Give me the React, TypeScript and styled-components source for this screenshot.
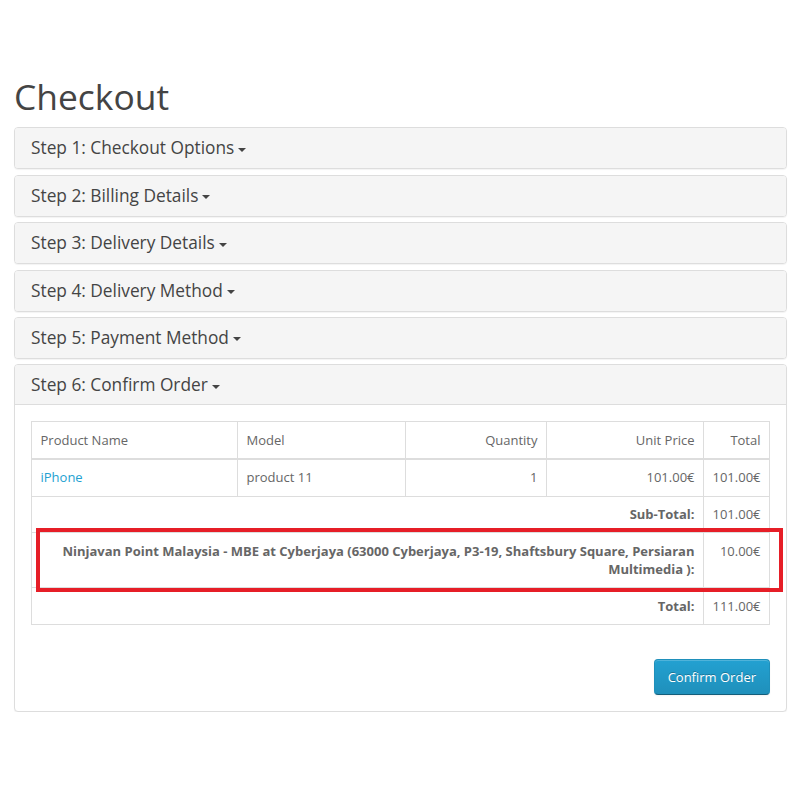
import React from 'react'
import styled, { createGlobalStyle } from 'styled-components'

const GlobalStyle = createGlobalStyle`
  html, body {
    margin: 0;
    padding: 0;
    background: #fff;
  }
  body {
    font-family: 'Open Sans', 'Liberation Sans', sans-serif;
    font-size: 13px;
    line-height: 1.42857;
    color: #666;
  }
`

const Page = styled.div`
  width: 773px;
  margin-left: 14px;
  padding-top: 77px;
`

const Title = styled.h1`
  margin: 0 0 11.5px;
  font-size: 35.4px;
  font-weight: 400;
  line-height: 1.1;
  color: #444;
`

const PanelGroup = styled.div`
  display: flex;
  flex-direction: column;
  gap: 5.4px;
`

const Panel = styled.div`
  border: 1px solid #ddd;
  border-radius: 4px;
  background: #fff;
  box-shadow: 0 1px 1px rgba(0, 0, 0, 0.05);
`

const PanelHeading = styled.div<{ $open?: boolean }>`
  padding: 11px 16px 10px;
  background: #f5f5f5;
  border-bottom: 1px solid ${(p) => (p.$open ? '#ddd' : 'transparent')};
  border-radius: ${(p) => (p.$open ? '3px 3px 0 0' : '3px')};
`

const PanelTitle = styled.h4`
  margin: 0;
  font-size: 17.3px;
  font-weight: 400;
  line-height: 18px;
  color: #444;
`

const Caret = styled.span`
  display: inline-block;
  width: 0;
  height: 0;
  margin-left: 4px;
  vertical-align: middle;
  border-top: 4.5px solid #444;
  border-left: 4.5px solid transparent;
  border-right: 4.5px solid transparent;
`

const PanelBody = styled.div`
  padding: 16px;
`

const TableWrap = styled.div`
  position: relative;
`

const Table = styled.table`
  width: 100%;
  border-collapse: collapse;
  table-layout: fixed;
  border: 1px solid #ddd;
`

const Cell = styled.td<{ $right?: boolean; $head?: boolean }>`
  padding: 8.5px;
  border: 1px solid #ddd;
  border-bottom-width: ${(p) => (p.$head ? '2px' : '1px')};
  text-align: ${(p) => (p.$right ? 'right' : 'left')};
  vertical-align: top;
  color: #666;
`

const Link = styled.a`
  color: #23a1d1;
  text-decoration: none;
`

const Strong = styled.strong`
  font-weight: 700;
  color: #666;
`

const Highlight = styled.div`
  position: absolute;
  top: 107px;
  left: 4.5px;
  right: -12.5px;
  height: 64px;
  box-sizing: border-box;
  border: 4.5px solid #e61e27;
  pointer-events: none;
`

const Buttons = styled.div`
  display: flex;
  justify-content: flex-end;
  margin-top: 34px;
`

const PrimaryButton = styled.button`
  height: 36px;
  padding: 0 13px;
  font-family: inherit;
  font-size: 13px;
  color: #fff;
  text-shadow: 0 -1px 0 rgba(0, 0, 0, 0.25);
  background-image: linear-gradient(to bottom, #23a1d1, #1f90bb);
  border: 1px solid;
  border-color: #1f90bb #1f90bb #145e7a;
  border-radius: 4px;
  box-shadow: inset 0 1px 0 rgba(255, 255, 255, 0.2), 0 1px 2px rgba(0, 0, 0, 0.05);
  cursor: pointer;
`

const steps = [
  'Step 1: Checkout Options',
  'Step 2: Billing Details',
  'Step 3: Delivery Details',
  'Step 4: Delivery Method',
  'Step 5: Payment Method',
]

const totals = [
  { label: 'Sub-Total:', value: '101.00€' },
  {
    label:
      'Ninjavan Point Malaysia - MBE at Cyberjaya (63000 Cyberjaya, P3-19, Shaftsbury Square, Persiaran Multimedia ):',
    value: '10.00€',
  },
  { label: 'Total:', value: '111.00€' },
]

export default function App() {
  return (
    <Page>
      <GlobalStyle />
      <Title>Checkout</Title>
      <PanelGroup>
        {steps.map((s) => (
          <Panel key={s}>
            <PanelHeading>
              <PanelTitle>
                {s}
                <Caret />
              </PanelTitle>
            </PanelHeading>
          </Panel>
        ))}
        <Panel>
          <PanelHeading $open>
            <PanelTitle>
              Step 6: Confirm Order
              <Caret />
            </PanelTitle>
          </PanelHeading>
          <PanelBody>
            <TableWrap>
              <Table>
                <colgroup>
                  <col style={{ width: 206 }} />
                  <col style={{ width: 168 }} />
                  <col style={{ width: 141 }} />
                  <col style={{ width: 157 }} />
                  <col />
                </colgroup>
                <thead>
                  <tr>
                    <Cell $head>Product Name</Cell>
                    <Cell $head>Model</Cell>
                    <Cell $head $right>Quantity</Cell>
                    <Cell $head $right>Unit Price</Cell>
                    <Cell $head $right>Total</Cell>
                  </tr>
                </thead>
                <tbody>
                  <tr>
                    <Cell>
                      <Link href="#">iPhone</Link>
                    </Cell>
                    <Cell>product 11</Cell>
                    <Cell $right>1</Cell>
                    <Cell $right>101.00€</Cell>
                    <Cell $right>101.00€</Cell>
                  </tr>
                </tbody>
                <tfoot>
                  {totals.map((t) => (
                    <tr key={t.value}>
                      <Cell colSpan={4} $right>
                        <Strong>{t.label}</Strong>
                      </Cell>
                      <Cell $right>{t.value}</Cell>
                    </tr>
                  ))}
                </tfoot>
              </Table>
              <Highlight />
            </TableWrap>
            <Buttons>
              <PrimaryButton>Confirm Order</PrimaryButton>
            </Buttons>
          </PanelBody>
        </Panel>
      </PanelGroup>
    </Page>
  )
}
